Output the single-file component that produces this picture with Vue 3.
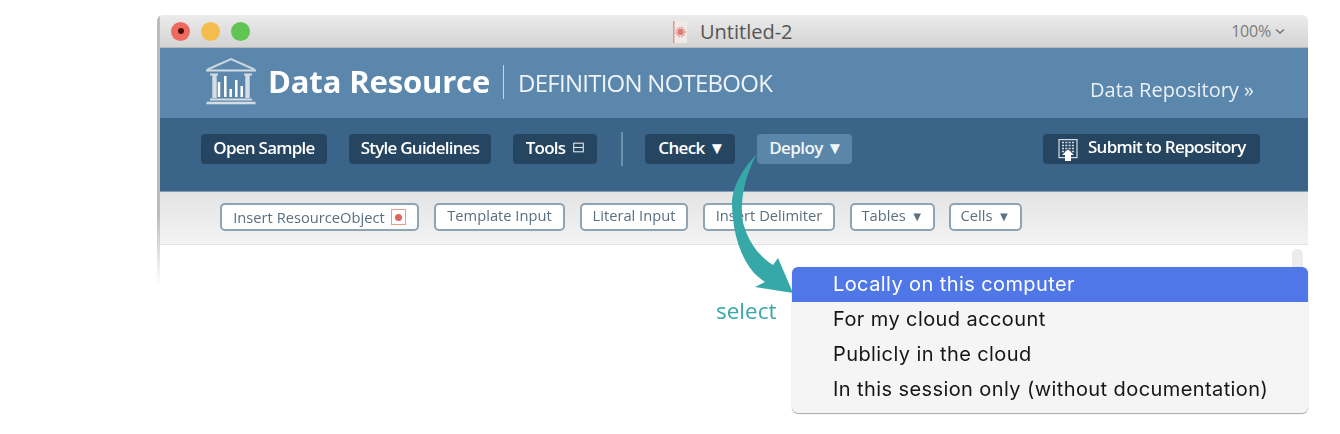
<script setup>
const primary = [
  { label: 'Open Sample', w: 126 },
  { label: 'Style Guidelines', w: 142 }
]
const secondary = [
  { key: 'template', text: 'Template Input', w: 131 },
  { key: 'literal', text: 'Literal Input', w: 108 },
  { key: 'delim', text: 'Insert Delimiter', w: 132 },
  { key: 'tables', text: 'Tables', w: 85, caret: true },
  { key: 'cells', text: 'Cells', w: 73, caret: true }
]
const menu = [
  'Locally on this computer',
  'For my cloud account',
  'Publicly in the cloud',
  'In this session only (without documentation)'
]
</script>

<template>
  <div class="stage">
    <div class="window">
      <div class="titlebar">
        <div class="lights">
          <span class="light red"><i></i></span>
          <span class="light yellow"></span>
          <span class="light green"></span>
        </div>
        <div class="doc">
          <svg width="14" height="22" viewBox="0 0 14 22">
            <rect width="14" height="22" fill="#efebea"/>
            <rect width="1.600" height="22" fill="#e39a8c"/>
            <circle cx="7.500" cy="11" r="3.200" fill="#dd7d70"/>
            <circle cx="7.500" cy="11" r="4.500" fill="none" stroke="#e08f84" stroke-width="1.500" stroke-dasharray="1.400 1"/>
          </svg>
          <span>Untitled-2</span>
        </div>
        <div class="zoom">100%
          <svg width="10" height="7" viewBox="0 0 10 7"><path d="M1 1.500l4 3.500 4-3.500" fill="none" stroke="#777" stroke-width="1.600"/></svg>
        </div>
      </div>

      <header class="brand">
        <svg class="bank" width="50" height="50" viewBox="0 0 50 50">
          <path d="M1.500 12.500L25 2l23.500 10.500" fill="none" stroke="#ccd6df" stroke-width="2"/>
          <path d="M0 13.500h50" stroke="#d5dde4" stroke-width="2.200"/>
          <path d="M4 17.500h8M38 17.500h8" stroke="#d5dde4" stroke-width="2.200"/>
          <path d="M8.500 18v23M41.500 18v23" stroke="#d5dde4" stroke-width="4.400"/>
          <path d="M13 40V25M19.300 40V19M24.700 40V32M30.300 40V23M35.700 40V29" stroke="#fff" stroke-width="2.500"/>
          <path d="M4 42.500h42" stroke="#d5dde4" stroke-width="1.800"/>
          <path d="M0.500 46h49" stroke="#d5dde4" stroke-width="2.600"/>
        </svg>
        <span class="title">Data Resource</span>
        <span class="divider"></span>
        <span class="subtitle">DEFINITION NOTEBOOK</span>
        <span class="repo">Data Repository »</span>
      </header>

      <nav class="toolbar">
        <button v-for="b in primary" :key="b.label" class="dark" :style="{ width: b.w + 'px' }">{{ b.label }}</button>
        <button class="dark tools">Tools
          <svg width="11" height="11" viewBox="0 0 11 11"><rect x=".7" y="1.200" width="9.600" height="8.600" fill="none" stroke="#dfe6ec" stroke-width="1.100"/><path d="M1 5.500h9" stroke="#dfe6ec" stroke-width="1.100"/></svg>
        </button>
        <span class="sep"></span>
        <button class="dark check">Check ▼</button>
        <button class="dark deploy">Deploy ▼</button>
        <button class="dark submit">
          <svg width="20" height="22" viewBox="0 0 20 22">
            <rect x="1" y=".6" width="18" height="18" fill="none" stroke="#d4dde4" stroke-width="1.200"/>
            <path d="M4 3.500h12M4 6.500h12M4 9.500h12M4 12.500h12" stroke="#d4dde4" stroke-width="1.500" stroke-dasharray="2 1.300"/>
            <path d="M10 10.500l6 5.500h-3v6H7v-6H4z" fill="#fff"/>
          </svg>
          <span>Submit to Repository</span>
        </button>
      </nav>

      <div class="subbar">
        <button class="light-btn first">Insert ResourceObject <span class="obj"><i></i></span></button>
        <button v-for="b in secondary" :key="b.key" class="light-btn" :style="{ width: b.w + 'px' }">
          {{ b.text }}<span v-if="b.caret" class="caret">▼</span>
        </button>
      </div>

      <div class="canvas">
        <div class="scroll"></div>
      </div>
    </div>

    <svg class="arrow" width="70" height="150" viewBox="0 0 70 150">
      <path d="M31 4C15 20 5 40 6 56c1 29 9 52 22 67 4 4 8 7 11 9l-10 5 38 6-15-35-5 7C36 108 24 96 18 76 13 58 17 28 31 4z" fill="#37a8a8"/>
    </svg>
    <div class="select">select</div>

    <ul class="menu">
      <li v-for="(m, i) in menu" :key="m" :class="{ active: i === 0 }">{{ m }}</li>
    </ul>
  </div>
</template>

<style>
html, body { margin: 0; background: #fff; }
</style>

<style scoped>
.stage {
  position: relative;
  width: 1340px;
  height: 434px;
  overflow: hidden;
  box-sizing: border-box;
  padding: 15px 0 0 157px;
  font-family: "Open Sans", "Noto Sans", sans-serif;
}
.window {
  width: 1151px;
  height: 270px;
  box-sizing: border-box;
  padding-left: 3px;
  border-radius: 6px 6px 0 0;
  overflow: hidden;
  background: linear-gradient(#bcbcbc 0, #bcbcbc 200px, #fff 100%) left / 3px 100% no-repeat;
  display: flex;
  flex-direction: column;
  filter: blur(.6px);
}
.titlebar {
  height: 33px;
  flex: none;
  position: relative;
  box-sizing: border-box;
  border-bottom: 1px solid #b8b8b8;
  background: linear-gradient(#ebebeb, #d3d3d3);
  display: flex;
  align-items: center;
  justify-content: space-between;
  padding: 0 23px 0 11px;
}
.lights { display: flex; gap: 11px; }
.light { width: 19px; height: 19px; border-radius: 50%; display: flex; align-items: center; justify-content: center; }
.red { background: #ee6a5f; }
.red i { width: 6px; height: 6px; border-radius: 50%; background: #4a0d08; }
.yellow { background: #f5bd4f; }
.green { background: #61c554; }
.doc {
  position: absolute;
  left: 513px;
  top: 6px;
  display: flex;
  align-items: center;
  gap: 13px;
  font-size: 20px;
  line-height: 22px;
  color: #555;
}
.zoom {
  font-size: 16px;
  color: #7b7b7b;
  display: flex;
  align-items: center;
  gap: 4px;
  letter-spacing: -.2px;
}
.brand {
  height: 70px;
  flex: none;
  box-sizing: border-box;
  background: #5b87ad;
  display: flex;
  align-items: center;
  padding: 0 54px 0 46px;
  color: #fff;
}
.bank { flex: none; margin-right: 12px; margin-top: -2px; }
.title { font-size: 31px; font-weight: 700; letter-spacing: -.15px; white-space: nowrap; margin-top: -5px; }
.divider { width: 1px; height: 34px; background: #c7d6e3; margin: -2px 14px 0 13px; }
.subtitle { font-size: 24px; color: #eef3f7; letter-spacing: -.75px; white-space: nowrap; margin-top: -2px; }
.repo { margin-left: auto; margin-top: 13px; font-size: 20px; font-weight: 500; color: #eaf0f5; letter-spacing: 0; white-space: nowrap; }
.toolbar {
  height: 74px;
  flex: none;
  box-sizing: border-box;
  background: #3a6488;
  border-bottom: 1px solid #7f9fb8;
  display: flex;
  align-items: flex-start;
  padding: 16px 48px 0 41px;
}
.dark {
  height: 30px;
  box-sizing: border-box;
  margin: 0 22px 0 0;
  padding: 0 0 3px;
  border: 0;
  border-radius: 4px;
  background: #264560;
  color: #fff;
  font-family: inherit;
  font-size: 17px;
  font-weight: 600;
  letter-spacing: -.75px;
  white-space: nowrap;
  display: flex;
  align-items: center;
  justify-content: center;
  gap: 6px;
}
.tools { width: 84px; margin-right: 0; gap: 8px; }
.sep { width: 2px; height: 34px; margin: -2px 22px 0 24px; background: #6d90ac; }
.check { width: 90px; letter-spacing: -.6px; padding-left: 3px; }
.deploy { width: 95px; background: #5a86aa; margin-right: 0; color: #f2f6f9; letter-spacing: -.6px; padding-left: 3px; }
.submit { width: 217px; margin: 0 0 0 auto; padding: 0 0 0 15px; gap: 10px; justify-content: flex-start; }
.submit span { margin-top: -5px; }
.submit svg { margin-top: 2px; }
.subbar {
  height: 53px;
  flex: none;
  box-sizing: border-box;
  background: linear-gradient(#e4e4e4, #f3f3f3);
  border-bottom: 1px solid #e4e4e4;
  display: flex;
  align-items: flex-start;
  gap: 15px;
  padding: 11px 0 0 60px;
}
.light-btn {
  height: 28px;
  box-sizing: border-box;
  padding: 0 0 4px;
  border: 2px solid #8ea3b3;
  border-radius: 5px;
  background: #fff;
  color: #5a6f80;
  font-family: inherit;
  font-size: 14.7px;
  white-space: nowrap;
  display: flex;
  align-items: center;
  justify-content: center;
}
.light-btn:last-child { margin-left: -1px; }
.first { width: 199px; padding: 0 0 1px; gap: 1px; }
.caret { font-size: 13px; margin-left: 5px; margin-top: 1px; }
.obj {
  width: 15px;
  height: 16px;
  box-sizing: border-box;
  border: 1px solid #ec9a90;
  margin-left: 5px;
  margin-top: 1px;
  display: flex;
  align-items: center;
  justify-content: center;
}
.obj i { width: 7px; height: 7px; border-radius: 50%; background: #e0655a; }
.canvas { flex: 1; background: #fff; position: relative; }
.scroll {
  position: absolute;
  right: 5px;
  top: 4px;
  width: 11px;
  height: 40px;
  border-radius: 5px;
  background: #ececec;
}
.arrow { position: absolute; left: 726px; top: 150px; }
.select {
  position: absolute;
  left: 716px;
  top: 297px;
  font-size: 22.500px;
  line-height: 28px;
  color: #37a8a8;
}
.menu {
  position: absolute;
  left: 792px;
  top: 267px;
  width: 516px;
  margin: 0;
  padding: 0;
  list-style: none;
  border-radius: 6px;
  overflow: hidden;
  background: #f5f5f5;
  box-shadow: 0 1px 1px #a8a8a8, 0 0 1px #c4c4c4;
  font-family: Inter, "Noto Sans", sans-serif;
  font-size: 20px;
  letter-spacing: .41px;
  color: #161616;
}
.menu li { height: 35px; line-height: 34px; padding-left: 41px; white-space: nowrap; }
.menu li:last-child { height: 41px; }
.menu .active { background: #4f77e8; color: #fff; }
</style>
